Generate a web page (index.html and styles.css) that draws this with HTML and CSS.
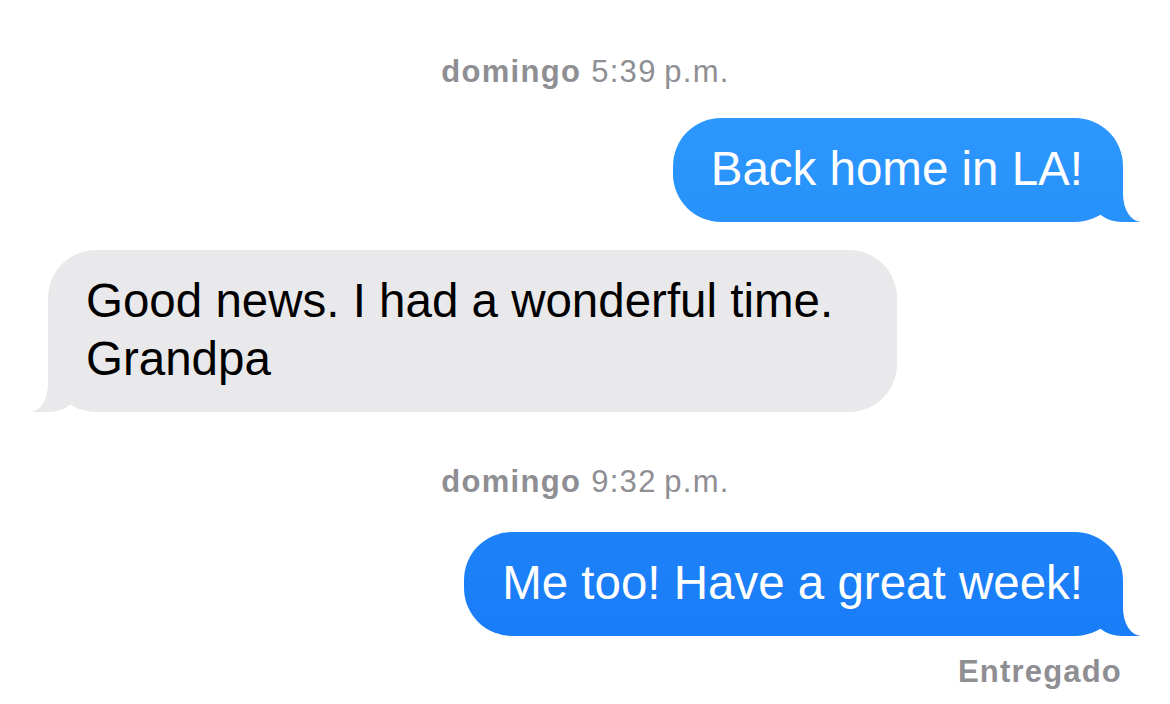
FILE: index.html
```html
<!DOCTYPE html>
<html lang="es">

<head>
  <meta charset="UTF-8">
  <title>Mensajes</title>
  <link rel="stylesheet" href="styles.css">
</head>

<body>
  <main class="thread">
    <p class="stamp"><b>domingo</b> 5:39&#8239;p.m.</p>
    <div class="msg sent">Back home in LA!</div>
    <div class="msg received">Good news. I had a wonderful time. Grandpa</div>

    <p class="stamp later"><b>domingo</b> 9:32&#8239;p.m.</p>
    <div class="msg sent">Me too! Have a great week!</div>
    <p class="status">Entregado</p>
  </main>
</body>

</html>
```

FILE: styles.css
```css
body {
  margin: 0;
  background: #fff;
  font-family: "Liberation Sans", Arial, sans-serif;
}

.thread {
  display: flex;
  flex-direction: column;
  padding: 54px 47px 0 48px;
}

.stamp {
  align-self: center;
  margin: 0 0 28px;
  font-size: 31px;
  line-height: 36px;
  letter-spacing: 1.3px;
  color: #8e8e93;
}

.stamp.later {
  margin: 52px 0 32px;
}

.msg {
  position: relative;
  box-sizing: border-box;
  max-width: 849px;
  padding: 22px 40px 24px 38px;
  border-radius: 48px;
  font-size: 47.5px;
  line-height: 58px;
}

.msg::before,
.msg::after {
  content: "";
  position: absolute;
  bottom: 0;
}

.sent,
.sent::before {
  background: linear-gradient(#309dfe, #1779f7) fixed;
}

.sent {
  align-self: flex-end;
  color: #fff;
}

.sent::before {
  right: -17px;
  width: 48px;
  height: 50px;
  border-bottom-left-radius: 30px 24px;
}

.sent::after {
  right: -40px;
  width: 40px;
  height: 52px;
  background: #fff;
  border-bottom-left-radius: 18px 28px;
}

.msg + .msg {
  margin-top: 28px;
}

.received {
  align-self: flex-start;
  background: #e9e9eb;
  color: #000;
}

.received::before {
  left: -17px;
  width: 48px;
  height: 50px;
  background: #e9e9eb;
  border-bottom-right-radius: 30px 26px;
}

.received::after {
  left: -40px;
  width: 40px;
  height: 52px;
  background: #fff;
  border-bottom-right-radius: 18px 28px;
}

.status {
  align-self: flex-end;
  margin: 18px 1px 0 0;
  font-size: 31px;
  font-weight: bold;
  line-height: 36px;
  letter-spacing: 1.2px;
  color: #8e8e93;
}
```
